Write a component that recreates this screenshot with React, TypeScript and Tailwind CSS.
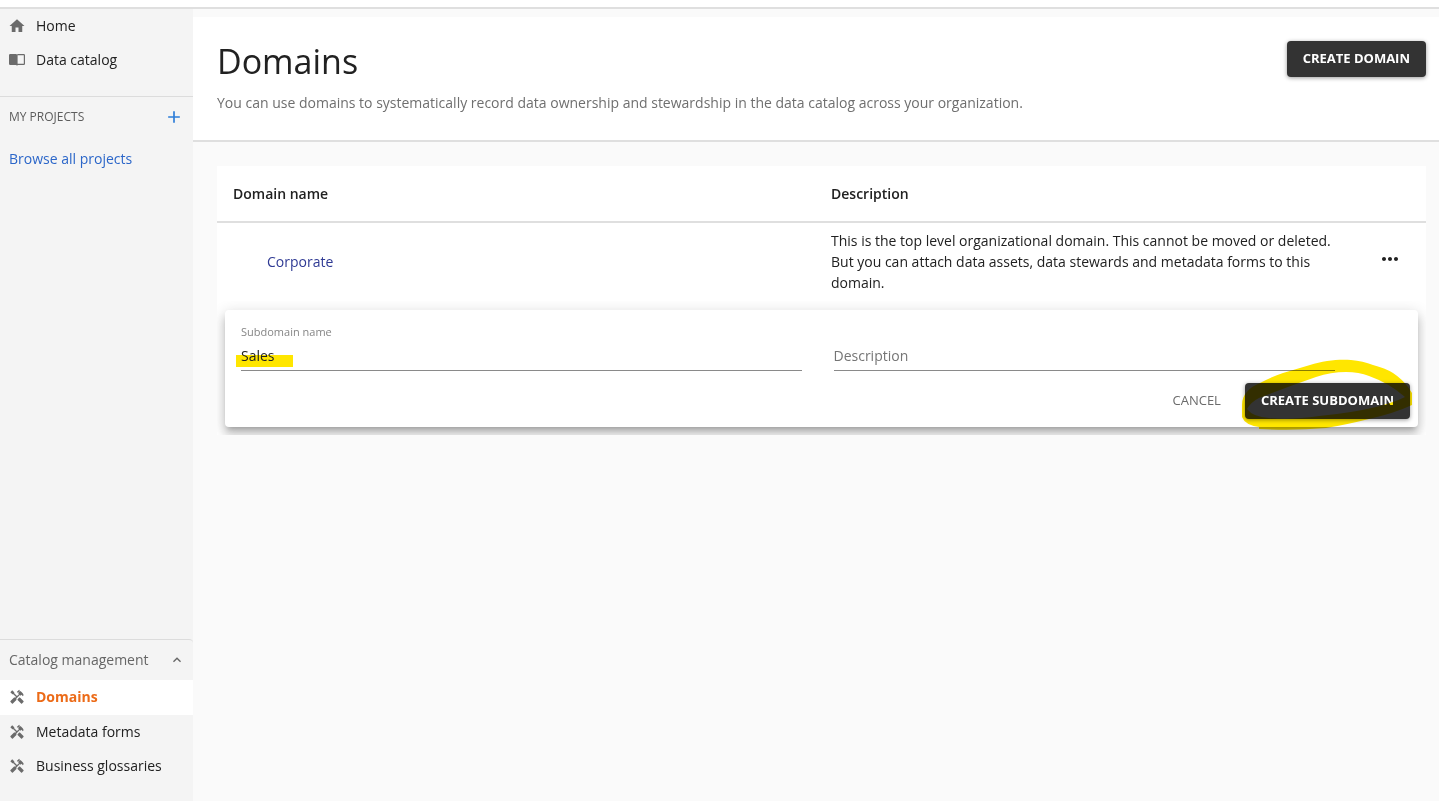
import React from "react";
import {
  MdAdd,
  MdHandyman,
  MdHome,
  MdKeyboardArrowUp,
  MdMoreHoriz,
} from "react-icons/md";

function BookIcon() {
  return (
    <svg viewBox="0 0 16 14" className="h-3.5 w-4" fill="#6b6b6b">
      <path d="M1.300 1H7q.6 0 1 .5Q8.400 1 9 1h5.700Q16 1 16 2.300v8.400Q16 12 14.700 12H9q-.6 0-1 .7Q7.600 12 7 12H1.300Q0 12 0 10.700v-8.400Q0 1 1.300 1zM8.600 2.200v8.600h6.200V2.200z" />
    </svg>
  );
}

function NavItem({ icon, label, active }: any) {
  return (
    <li className={active ? "bg-white" : ""}>
      <a
        href="#"
        className={
          active
            ? "flex h-[35px] items-center gap-[11px] pb-px pl-[9px] font-bold text-[#ec6b18]"
            : "flex h-[34px] items-center gap-[11px] pb-px pl-[9px] text-[#212121]"
        }
      >
        <span className="flex w-4 justify-center text-[#6b6b6b]">{icon}</span>
        {label}
      </a>
    </li>
  );
}

function Sidebar() {
  return (
    <aside className="flex w-[193px] shrink-0 flex-col bg-[#f4f4f4]">
      <ul className="border-b border-[#dcdcdc] pb-[19px]">
        <NavItem icon={<MdHome size={18} className="shrink-0" />} label="Home" />
        <NavItem icon={<BookIcon />} label="Data catalog" />
      </ul>
      <div className="flex h-10 items-center justify-between px-[9px]">
        <h2 className="text-xs text-[#5c5c5c]">MY PROJECTS</h2>
        <button aria-label="Add project" className="text-[#2d7dd8]">
          <MdAdd size={20} />
        </button>
      </div>
      <a href="#" className="mt-3 px-[9px] text-[#2b66c9]">
        Browse all projects
      </a>
      <div className="mt-auto rounded-tr border-t border-[#dcdcdc] pb-[18px]">
        <button className="flex h-10 w-full items-center justify-between pr-2 pl-[9px] text-[#666]">
          Catalog management
          <MdKeyboardArrowUp size={16} />
        </button>
        <ul>
          <NavItem icon={<MdHandyman size={16} />} label="Domains" active />
          <NavItem icon={<MdHandyman size={16} />} label="Metadata forms" />
          <NavItem icon={<MdHandyman size={16} />} label="Business glossaries" />
        </ul>
      </div>
    </aside>
  );
}

function DarkButton({ children }: any) {
  return (
    <button className="h-9 shrink-0 rounded bg-[#333] px-4 pb-px text-[13px] font-bold text-white shadow-[0_1px_4px_rgba(0,0,0,0.4)]">
      {children}
    </button>
  );
}

function SubdomainForm() {
  return (
    <div className="overflow-hidden bg-white px-2 pt-[9px] pb-2">
      <form className="relative rounded bg-white pt-3 pr-6 pb-2 pl-4 shadow-[0_5px_5px_-3px_rgba(0,0,0,0.2),0_8px_10px_1px_rgba(0,0,0,0.14),0_3px_14px_2px_rgba(0,0,0,0.12)]">
        <div className="grid grid-cols-2 gap-8">
          <div>
            <label htmlFor="name" className="block text-[11px] leading-5 text-[#858585]">
              Subdomain name
            </label>
            <div className="relative">
              <div className="absolute top-[13px] -left-[5px] h-3 w-[57px] bg-[#ffe600]" />
              <input
                id="name"
                defaultValue="Sales"
                className="relative block h-[29px] w-full border-b border-[#8a8a8a] bg-transparent pb-px outline-none"
              />
            </div>
          </div>
          <div className="pt-5 pr-[59px]">
            <input
              aria-label="Description"
              placeholder="Description"
              className="block h-[29px] w-full border-b border-[#8a8a8a] pb-px outline-none placeholder:text-[#757575]"
            />
          </div>
        </div>
        <div className="mt-3 -mr-4 flex justify-end gap-2">
          <button type="button" className="px-4 pb-px text-[13px] text-[#6b6b6b]">
            CANCEL
          </button>
          <DarkButton>CREATE SUBDOMAIN</DarkButton>
        </div>
        <Highlight />
      </form>
    </div>
  );
}

// yellow marker ring around the submit button
function Highlight() {
  return (
    <svg
      viewBox="0 0 172 72"
      className="pointer-events-none absolute right-[5px] -bottom-[3px] h-[72px] w-[172px] mix-blend-multiply"
      fill="#ffe600"
      fillRule="evenodd"
    >
      <path d="M1 47C1 36 9 29 19 25Q30 19 42 15L69 7C83 2 100 1 110 2Q122 3 132 7Q144 10 152 15Q161 21 167 29L171 35V47Q154 55 128 61Q104 67 85 70Q52 73 18 71V69Q4 67 1 59ZM6 51Q10 44 18 40Q46 29 75 19Q90 14 105 14Q118 14 128 18Q148 25 164 39Q154 44 135 49Q110 55 78 58Q50 62 28 60Q12 59 6 51Z" />
    </svg>
  );
}

export default function App() {
  return (
    <div className="flex min-h-screen flex-col bg-[#fafafa] font-['Open_Sans','Noto_Sans',sans-serif] text-sm text-[#212121]">
      <div className="h-[9px] border-b-2 border-[#dfdfdf] bg-white" />
      <div className="flex grow">
        <Sidebar />
        <main className="min-w-0 grow pt-2">
          <header className="flex items-start justify-between border-b-2 border-[#dfdfdf] bg-white pt-6 pr-[13px] pb-[27px] pl-6">
            <div>
              <h1 className="text-[34px] leading-10">Domains</h1>
              <p className="mt-3 text-[#6f6f6f]">
                You can use domains to systematically record data ownership and
                stewardship in the data catalog across your organization.
              </p>
            </div>
            <DarkButton>CREATE DOMAIN</DarkButton>
          </header>
          <section className="mt-6 mr-[13px] ml-6">
            <table className="w-full table-fixed bg-white text-left">
              <thead>
                <tr className="h-14 border-b-2 border-[#dfdfdf]">
                  <th className="w-[598px] pl-4 font-semibold">Domain name</th>
                  <th className="pl-4 font-semibold">Description</th>
                  <td className="w-[72px]" />
                </tr>
              </thead>
              <tbody>
                <tr>
                  <td className="pl-[50px]">
                    <a href="#" className="text-[#2f3a94]">Corporate</a>
                  </td>
                  <td className="pt-[7px] pr-4 pb-2 pl-4 leading-[21px]">
                    This is the top level organizational domain. This cannot be
                    moved or deleted. But you can attach data assets, data
                    stewards and metadata forms to this domain.
                  </td>
                  <td>
                    <button aria-label="More actions" className="mb-1.5 ml-6 block">
                      <MdMoreHoriz size={24} />
                    </button>
                  </td>
                </tr>
              </tbody>
            </table>
            <SubdomainForm />
          </section>
        </main>
      </div>
    </div>
  );
}
